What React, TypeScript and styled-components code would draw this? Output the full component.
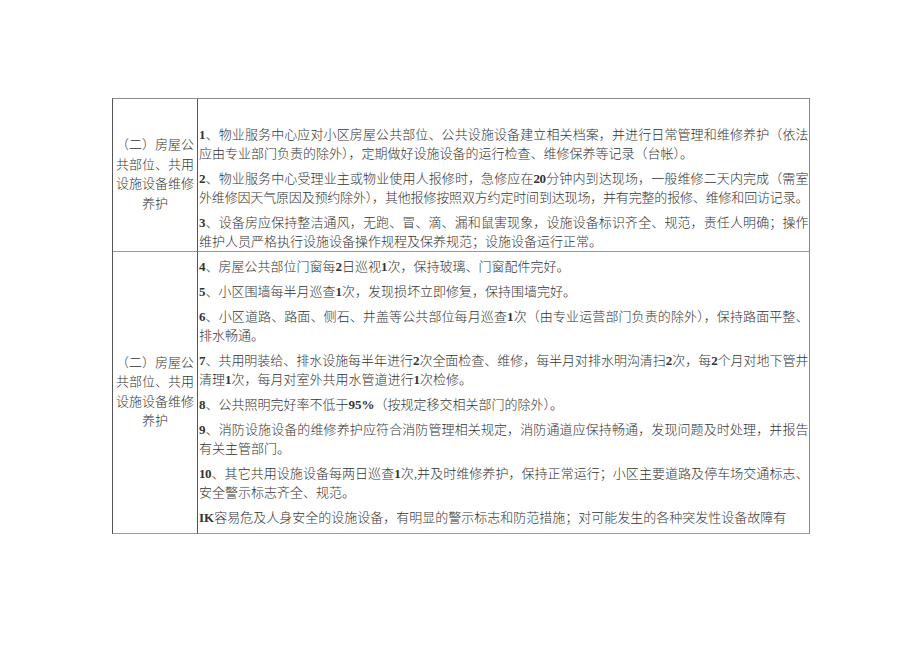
import React from "react"
import styled, { createGlobalStyle } from "styled-components"

const GlobalStyle = createGlobalStyle`
  body {
    margin: 0;
    background: #fff;
  }
`

const Page = styled.div`
  padding: 98px 0 0 112px;
  font-family: "Noto Sans CJK SC", sans-serif;
  font-size: 13px;
  font-weight: 300;
  color: #333;
`

const Sheet = styled.div`
  display: grid;
  grid-template-columns: 85px 612px;
  grid-template-rows: 153px 282px;
  width: 698px;
  box-sizing: border-box;
  border-top: 1px solid #8c8c8c;
  border-left: 1px solid #555;
`

const LabelCell = styled.div`
  display: flex;
  align-items: center;
  justify-content: center;
  box-sizing: border-box;
  padding: 0 2px 4px;
  text-align: center;
  line-height: 19.5px;
  border-right: 1px solid #555;
  border-bottom: 1px solid #999;
`

const ContentCell = styled.div<{ $top: number }>`
  box-sizing: border-box;
  padding: ${p => p.$top}px 1px 0 1px;
  border-right: 1px solid #888;
  border-bottom: 1px solid #999;
`

const Para = styled.div`
  line-height: 19px;

  & + & {
    margin-top: 6px;
  }
`

const Line = styled.div<{ $full?: boolean }>`
  text-align: left;
  ${p =>
    p.$full &&
    `
    letter-spacing: -0.5px;
    text-align: justify;
    text-align-last: justify;
  `}
`

const Num = styled.span`
  font-family: "Liberation Serif", serif;
  font-weight: 700;
  line-height: 1;
`

type LineData = { text: string; full?: boolean }

const label = "（二）房屋公共部位、共用设施设备维修养护"

const rows: { top: number; paras: LineData[][] }[] = [
  {
    top: 25,
    paras: [
      [
        { text: "1、物业服务中心应对小区房屋公共部位、公共设施设备建立相关档案，并进行日常管理和维修养护（依法", full: true },
        { text: "应由专业部门负责的除外），定期做好设施设备的运行检查、维修保养等记录（台帐）。" },
      ],
      [
        { text: "2、物业服务中心受理业主或物业使用人报修时，急修应在20分钟内到达现场，一般维修二天内完成（需室", full: true },
        { text: "外维修因天气原因及预约除外），其他报修按照双方约定时间到达现场，并有完整的报修、维修和回访记录。", full: true },
      ],
      [
        { text: "3、设备房应保持整洁通风，无跑、冒、滴、漏和鼠害现象，设施设备标识齐全、规范，责任人明确；操作", full: true },
        { text: "维护人员严格执行设施设备操作规程及保养规范；设施设备运行正常。" },
      ],
    ],
  },
  {
    top: 4,
    paras: [
      [{ text: "4、房屋公共部位门窗每2日巡视1次，保持玻璃、门窗配件完好。" }],
      [{ text: "5、小区围墙每半月巡查1次，发现损坏立即修复，保持围墙完好。" }],
      [
        { text: "6、小区道路、路面、侧石、井盖等公共部位每月巡查1次（由专业运营部门负责的除外），保持路面平整、", full: true },
        { text: "排水畅通。" },
      ],
      [
        { text: "7、共用明装给、排水设施每半年进行2次全面检查、维修，每半月对排水明沟清扫2次，每2个月对地下管井", full: true },
        { text: "清理1次，每月对室外共用水管道进行1次检修。" },
      ],
      [{ text: "8、公共照明完好率不低于95%（按规定移交相关部门的除外）。" }],
      [
        { text: "9、消防设施设备的维修养护应符合消防管理相关规定，消防通道应保持畅通，发现问题及时处理，并报告", full: true },
        { text: "有关主管部门。" },
      ],
      [
        { text: "10、其它共用设施设备每两日巡查1次,并及时维修养护，保持正常运行；小区主要道路及停车场交通标志、", full: true },
        { text: "安全警示标志齐全、规范。" },
      ],
      [{ text: "IK容易危及人身安全的设施设备，有明显的警示标志和防范措施；对可能发生的各种突发性设备故障有" }],
    ],
  },
]

// latin runs (numbers, IK) are set in a bold serif like the original
const rich = (text: string) =>
  text.split(/([0-9A-Za-z%]+)/).map((part, i) =>
    i % 2 === 1 ? <Num key={i}>{part}</Num> : part
  )

const App: React.FC = () => {
  return (
    <Page>
      <GlobalStyle />
      <Sheet>
        {rows.map((row, r) => (
          <React.Fragment key={r}>
            <LabelCell>{label}</LabelCell>
            <ContentCell $top={row.top}>
              {row.paras.map((para, p) => (
                <Para key={p}>
                  {para.map((line, l) => (
                    <Line key={l} $full={line.full}>
                      {rich(line.text)}
                    </Line>
                  ))}
                </Para>
              ))}
            </ContentCell>
          </React.Fragment>
        ))}
      </Sheet>
    </Page>
  )
}

export default App
